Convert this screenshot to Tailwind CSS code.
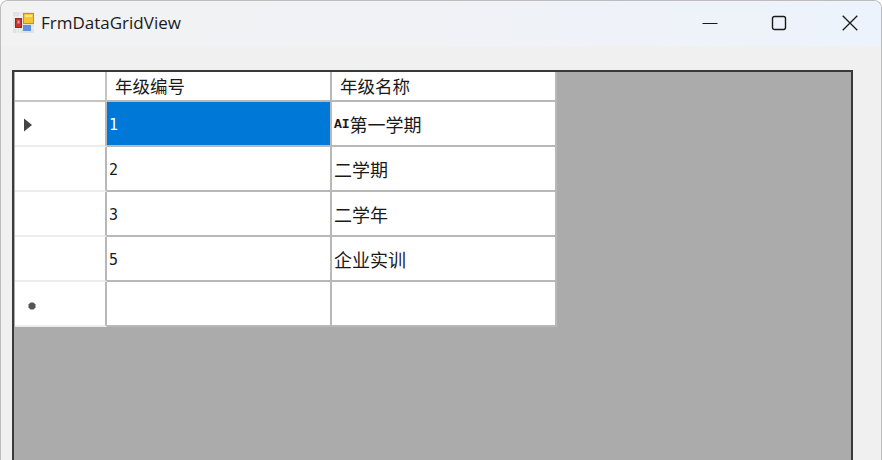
<!DOCTYPE html>
<html lang="zh">
<head>
<meta charset="utf-8">
<script src="https://cdn.jsdelivr.net/npm/@tailwindcss/browser@4"></script>
</head>
<body class="m-0 overflow-hidden">
<div class="w-[882px] h-[460px] overflow-hidden bg-[#f0f0f0] rounded-t-[8px] border-t border-l border-r border-[#bdbdbd] flex flex-col font-['Noto_Sans_CJK_SC',sans-serif]">
  <div class="h-[45px] shrink-0 pb-[2px] flex items-center bg-gradient-to-r from-[#f2f2f3] via-[#f0f2f6] to-[#edf3fc]">
    <svg class="ml-[12px] w-[21px] h-[21px]" viewBox="0 0 21 21">
      <rect x="0" y="0" width="21" height="21" fill="#e2e2e2"/>
      <path d="M7 0V6M0 5H9M9 0V12M0 16H21M4 16V21M7 16V21" stroke="#f4f4f4" stroke-width="1" fill="none"/>
      <rect x="10.5" y="1.5" width="10" height="10" fill="#f7c52e" stroke="#b8933a"/>
      <rect x="12" y="3" width="7" height="2" fill="#fbe08a"/>
      <rect x="2.5" y="6.5" width="6" height="9" fill="#c8332b" stroke="#8c2a26"/>
      <rect x="4.5" y="8.5" width="2" height="3" fill="#f0a0a0"/>
      <rect x="10" y="13" width="8" height="6" fill="#5f93e0"/>
    </svg>
    <span class="ml-[7px] text-[17px] leading-none text-[#1b1b1b] font-['Open_Sans',sans-serif] whitespace-nowrap">FrmDataGridView</span>
    <div class="ml-auto flex items-center">
      <svg class="w-[16px] h-[16px] mr-[53px]" viewBox="0 0 16 16"><path d="M0.5 8.5H15.5" stroke="#1a1a1a" stroke-width="1" fill="none"/></svg>
      <svg class="w-[16px] h-[16px] mr-[55px]" viewBox="0 0 16 16"><rect x="1.5" y="1.5" width="13" height="13" rx="2" stroke="#1a1a1a" stroke-width="1.4" fill="none"/></svg>
      <svg class="w-[16px] h-[16px] mr-[23px]" viewBox="0 0 16 16"><path d="M0.7 0.7L15.3 15.3M15.3 0.7L0.7 15.3" stroke="#1a1a1a" stroke-width="1.3" fill="none"/></svg>
    </div>
  </div>
  <div class="flex-1 pt-[24px] pl-[11px] pr-[28px]">
    <div class="h-[400px] bg-[#ababab] border-2 border-[#3a3a3a] border-b-0 pl-px">
      <div class="grid grid-cols-[92px_225px_225px] grid-rows-[30px_45px_45px_45px_45px_45px] w-[542px] text-[#1a1a1a] text-[17.5px]">
        <div class="bg-white border-r-2 border-b-2 border-[#c4c4c4]"></div>
        <div class="bg-white border-r-2 border-b-2 border-[#b8b8b8] flex items-center pl-[8px] leading-none">年级编号</div>
        <div class="bg-white border-r-2 border-b-2 border-[#b8b8b8] flex items-center pl-[8px] leading-none">年级名称</div>

        <div class="bg-white border-r-2 border-b-2 border-r-[#b8b8b8] border-b-[#ececec] flex items-center pl-[8px] pt-[2px]">
          <svg class="w-[10px] h-[14px]" viewBox="0 0 10 14"><path d="M1 0.5L9 7L1 13.5Z" fill="#444"/></svg>
        </div>
        <div class="bg-[#0078d7] border-r-2 border-b-2 border-[#b8b8b8] flex items-center pl-[2px] pt-[3px] text-white text-[15px] font-['DejaVu_Sans_Mono',monospace]">1</div>
        <div class="bg-white border-r-2 border-b-2 border-[#b8b8b8] flex items-center pl-[2px] pt-[1px] text-[18px] leading-none"><span class="font-['Liberation_Mono',monospace] text-[13px] font-bold">AI</span>第一学期</div>

        <div class="bg-white border-r-2 border-b-2 border-r-[#b8b8b8] border-b-[#ececec]"></div>
        <div class="bg-white border-r-2 border-b-2 border-[#b8b8b8] flex items-center pl-[2px] pt-[3px] text-[15px] font-['DejaVu_Sans_Mono',monospace]">2</div>
        <div class="bg-white border-r-2 border-b-2 border-[#b8b8b8] flex items-center pl-[2px] pt-[1px] text-[18px] leading-none">二学期</div>

        <div class="bg-white border-r-2 border-b-2 border-r-[#b8b8b8] border-b-[#ececec]"></div>
        <div class="bg-white border-r-2 border-b-2 border-[#b8b8b8] flex items-center pl-[2px] pt-[3px] text-[15px] font-['DejaVu_Sans_Mono',monospace]">3</div>
        <div class="bg-white border-r-2 border-b-2 border-[#b8b8b8] flex items-center pl-[2px] pt-[1px] text-[18px] leading-none">二学年</div>

        <div class="bg-white border-r-2 border-b-2 border-r-[#b8b8b8] border-b-[#ececec]"></div>
        <div class="bg-white border-r-2 border-b-2 border-[#b8b8b8] flex items-center pl-[2px] pt-[3px] text-[15px] font-['DejaVu_Sans_Mono',monospace]">5</div>
        <div class="bg-white border-r-2 border-b-2 border-[#b8b8b8] flex items-center pl-[2px] pt-[1px] text-[18px] leading-none">企业实训</div>

        <div class="bg-white border-r-2 border-b-2 border-r-[#b8b8b8] border-b-[#ececec] flex items-center pl-[13px] pt-[4px]">
          <svg class="w-[8px] h-[8px]" viewBox="0 0 8 8"><path d="M2.5 0.5H5.5L7.5 2.5V5.5L5.5 7.5H2.5L0.5 5.5V2.5Z" fill="#555"/></svg>
        </div>
        <div class="bg-white border-r-2 border-b-2 border-[#b8b8b8]"></div>
        <div class="bg-white border-r-2 border-b-2 border-[#b8b8b8]"></div>
      </div>
    </div>
  </div>
</div>
</body>
</html>
